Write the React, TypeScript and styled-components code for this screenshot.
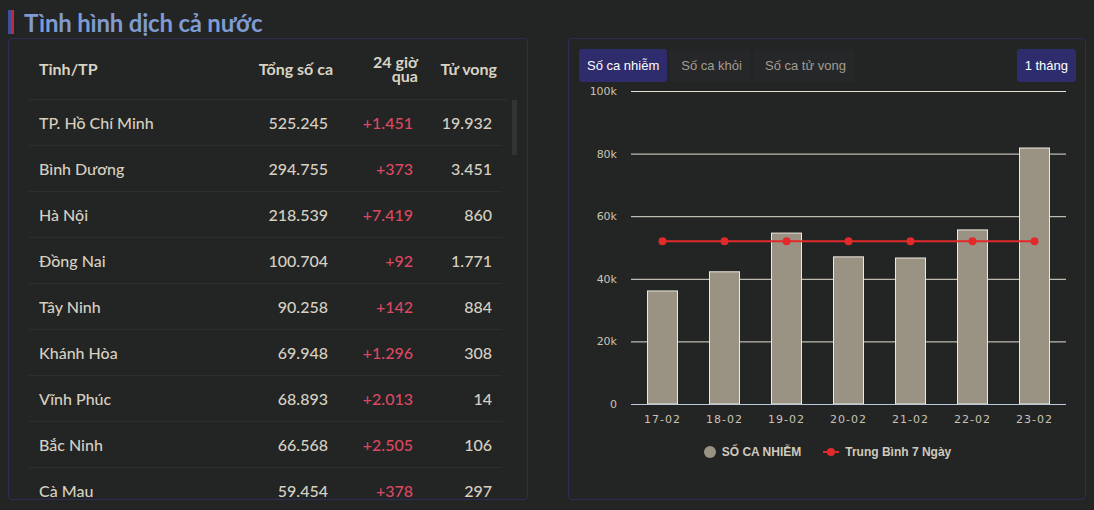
import React from "react";
import styled, { createGlobalStyle } from "styled-components";

const GlobalStyle = createGlobalStyle`
  html, body {
    margin: 0;
    padding: 0;
    background-color: #232424;
  }
  body {
    font-family: Lato, "Noto Sans", sans-serif;
  }
`;

interface IRow {
  name: string;
  total: number;
  today: number;
  deaths: number;
}

const rows: IRow[] = [
  { name: "TP. Hồ Chí Minh", total: 525245, today: 1451, deaths: 19932 },
  { name: "Bình Dương", total: 294755, today: 373, deaths: 3451 },
  { name: "Hà Nội", total: 218539, today: 7419, deaths: 860 },
  { name: "Đồng Nai", total: 100704, today: 92, deaths: 1771 },
  { name: "Tây Ninh", total: 90258, today: 142, deaths: 884 },
  { name: "Khánh Hòa", total: 69948, today: 1296, deaths: 308 },
  { name: "Vĩnh Phúc", total: 68893, today: 2013, deaths: 14 },
  { name: "Bắc Ninh", total: 66568, today: 2505, deaths: 106 },
  { name: "Cà Mau", total: 59454, today: 378, deaths: 297 },
];

const formatNumber = (value: number) =>
  value.toString().replace(/\B(?=(\d{3})+(?!\d))/g, ".");

const chartData = [
  { label: "17-02", value: 36120 },
  { label: "18-02", value: 42240 },
  { label: "19-02", value: 54610 },
  { label: "20-02", value: 47010 },
  { label: "21-02", value: 46650 },
  { label: "22-02", value: 55620 },
  { label: "23-02", value: 81790 },
];

const Page = styled.div`
  padding: 6px 8px 10px;
  box-sizing: border-box;
  width: 1094px;
  height: 510px;
`;

const TitleRow = styled.div`
  display: flex;
  align-items: center;
  height: 32px;
`;

const Stripe = styled.div`
  width: 6px;
  height: 24px;
  background: linear-gradient(to right, #3e4ea0 0 50%, #c02a3a 50% 100%);
  margin-right: 10px;
`;

const Title = styled.h1`
  margin: 0;
  font-size: 24px;
  font-weight: 700;
  color: #7f9bd0;
  letter-spacing: -0.2px;
`;

const Columns = styled.div`
  display: grid;
  grid-template-columns: 520px 518px;
  column-gap: 40px;
`;

const Panel = styled.div`
  border: 1px solid #2f2c56;
  border-radius: 4px;
  height: 462px;
  box-sizing: border-box;
  overflow: hidden;
`;

const TablePanel = styled(Panel)`
  padding: 0 10px 0 20px;
`;

const Grid = styled.div`
  display: grid;
  grid-template-columns: 1fr 120px 85px 79px;
  align-items: center;
`;

const HeaderRow = styled(Grid)`
  height: 60px;
  width: 478px;
  border-bottom: 1px solid #2d2e2e;
  color: #d9d3c3;
  font-weight: 700;
  font-size: 16px;
`;

const HeaderCell = styled.div<{ $align?: "left" | "right" }>`
  text-align: ${(p) => p.$align || "right"};
  padding: 0 10px;
  line-height: 14px;
`;

const BodyWrap = styled.div`
  display: flex;
  align-items: flex-start;
  gap: 10px;
  height: 401px;
`;

const RowList = styled.div`
  flex: 1;
  height: 100%;
  overflow: hidden;
`;

const ScrollTrack = styled.div`
  width: 5px;
  height: 100%;
`;

const ScrollThumb = styled.div`
  height: 55px;
  background-color: #323333;
`;

const Row = styled(Grid)`
  height: 45px;
  border-bottom: 1px solid #2d2e2e;
  color: #d6d0c1;
  font-size: 16px;
  font-weight: 500;
`;

const Cell = styled.div<{ $align?: "left" | "right"; $red?: boolean }>`
  text-align: ${(p) => p.$align || "right"};
  padding: 0 10px;
  color: ${(p) => (p.$red ? "#dc4861" : "inherit")};
  white-space: nowrap;
`;

const ChartPanel = styled(Panel)`
  padding: 10px 9px 0 10px;
`;

const Tabs = styled.div`
  display: flex;
  align-items: center;
  gap: 2px;
  font-family: "Liberation Sans", Arial, sans-serif;
`;

const Tab = styled.button<{ $active?: boolean }>`
  height: 33px;
  padding: ${(p) => (p.$active ? "0 8px" : "0 9px 0 12px")};
  border: none;
  border-radius: 3px;
  font-family: inherit;
  font-size: 13px;
  color: ${(p) => (p.$active ? "#ffffff" : "#a39d8f")};
  background-color: ${(p) => (p.$active ? "#2e2c6c" : "#262729")};
  cursor: pointer;
`;

const RangeButton = styled(Tab)`
  margin-left: auto;
`;

const ChartSvg = styled.svg`
  display: block;
  margin-top: 2px;
  font-family: "DejaVu Sans", sans-serif;
`;

const Legend = styled.div`
  display: flex;
  justify-content: center;
  align-items: center;
  gap: 22px;
  margin-top: 9px;
  font-family: "Liberation Sans", Arial, sans-serif;
  font-weight: 700;
  font-size: 12px;
  color: #cfcabd;
`;

const LegendItem = styled.div`
  display: flex;
  align-items: center;
  gap: 6px;
`;

const Dot = styled.span`
  width: 12px;
  height: 12px;
  border-radius: 50%;
  background-color: #9a9384;
`;

const LineMark = styled.span`
  position: relative;
  width: 16px;
  height: 2px;
  background-color: #e22a2a;

  &::after {
    content: "";
    position: absolute;
    left: 4px;
    top: -3px;
    width: 8px;
    height: 8px;
    border-radius: 50%;
    background-color: #e22a2a;
  }
`;

function Chart() {
  const width = 498;
  const gridRight = 487;
  const height = 352;
  const plotLeft = 52;
  const plotTop = 7;
  const plotBottom = 320;
  const max = 100000;
  const yOf = (v: number) => plotBottom - (v / max) * (plotBottom - plotTop);
  const ticks = [0, 20000, 40000, 60000, 80000, 100000];
  const avg = chartData.reduce((s, d) => s + d.value, 0) / chartData.length;
  const xOf = (i: number) => 83.5 + i * 62;
  const barWidth = 30;

  return (
    <ChartSvg width={width} height={height}>
      {ticks.map((t) => (
        <g key={t}>
          <text
            x={38}
            y={yOf(t) + 4}
            textAnchor="end"
            fontSize="11"
            fill="#c9c3b4"
          >
            {t === 0 ? "0" : `${t / 1000}k`}
          </text>
          {t !== 0 && (
            <line
              x1={plotLeft}
              x2={gridRight}
              y1={yOf(t) + 0.5}
              y2={yOf(t) + 0.5}
              stroke="#e3dfd2"
              strokeWidth="1"
            />
          )}
        </g>
      ))}
      {chartData.map((d, i) => (
        <rect
          key={d.label}
          x={xOf(i) - barWidth / 2}
          y={yOf(d.value)}
          width={barWidth}
          height={plotBottom - yOf(d.value)}
          fill="#9a9384"
          stroke="#ece8dc"
          strokeWidth="1"
        />
      ))}
      <line
        x1={plotLeft}
        x2={gridRight}
        y1={plotBottom + 0.5}
        y2={plotBottom + 0.5}
        stroke="#bcc8dc"
        strokeWidth="1"
      />
      {chartData.map((d, i) => (
        <text
          key={d.label}
          x={xOf(i)}
          y={plotBottom + 19}
          textAnchor="middle"
          fontSize="11"
          letterSpacing="1"
          fill="#c9c3b4"
        >
          {d.label}
        </text>
      ))}
      <line
        x1={xOf(0)}
        x2={xOf(chartData.length - 1)}
        y1={yOf(avg)}
        y2={yOf(avg)}
        stroke="#e22a2a"
        strokeWidth="2"
      />
      {chartData.map((d, i) => (
        <circle key={d.label} cx={xOf(i)} cy={yOf(avg)} r="4" fill="#e22a2a" />
      ))}
    </ChartSvg>
  );
}

function App() {
  return (
    <Page>
      <GlobalStyle />
      <TitleRow>
        <Stripe />
        <Title>Tình hình dịch cả nước</Title>
      </TitleRow>
      <Columns>
        <TablePanel>
          <HeaderRow>
            <HeaderCell $align="left">Tỉnh/TP</HeaderCell>
            <HeaderCell>Tổng số ca</HeaderCell>
            <HeaderCell>
              24 giờ
              <br />
              qua
            </HeaderCell>
            <HeaderCell>Tử vong</HeaderCell>
          </HeaderRow>
          <BodyWrap>
            <RowList>
              {rows.map((row) => (
                <Row key={row.name}>
                  <Cell $align="left">{row.name}</Cell>
                  <Cell>{formatNumber(row.total)}</Cell>
                  <Cell $red>+{formatNumber(row.today)}</Cell>
                  <Cell>{formatNumber(row.deaths)}</Cell>
                </Row>
              ))}
            </RowList>
            <ScrollTrack>
              <ScrollThumb />
            </ScrollTrack>
          </BodyWrap>
        </TablePanel>
        <ChartPanel>
          <Tabs>
            <Tab $active>Số ca nhiễm</Tab>
            <Tab>Số ca khỏi</Tab>
            <Tab>Số ca tử vong</Tab>
            <RangeButton $active>1 tháng</RangeButton>
          </Tabs>
          <Chart />
          <Legend>
            <LegendItem>
              <Dot />
              SỐ CA NHIỄM
            </LegendItem>
            <LegendItem>
              <LineMark />
              Trung Bình 7 Ngày
            </LegendItem>
          </Legend>
        </ChartPanel>
      </Columns>
    </Page>
  );
}

export default App;
